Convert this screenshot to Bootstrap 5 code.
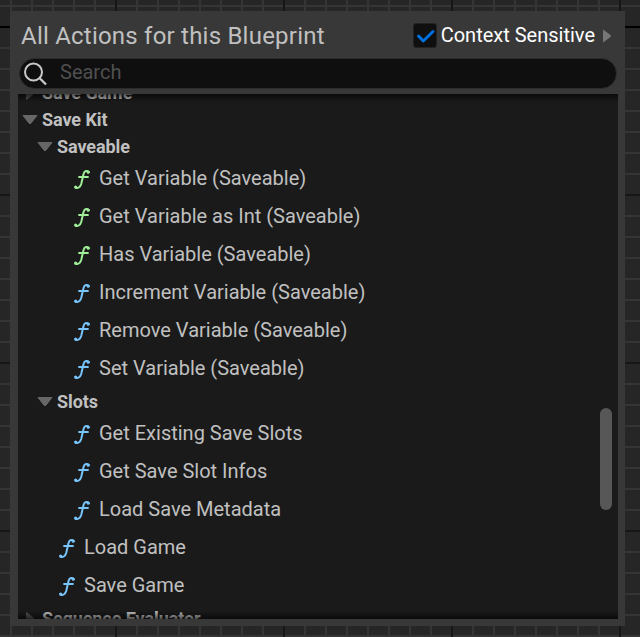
<!DOCTYPE html>
<html lang="en">
<head>
<meta charset="utf-8">
<title>Blueprint Actions</title>
<link href="https://cdn.jsdelivr.net/npm/bootstrap@5.3.0/dist/css/bootstrap.min.css" rel="stylesheet">
<style>
body{font-family:Roboto,"Liberation Sans",sans-serif;width:640px;height:637px;overflow:hidden;color:#c0c0c0;
 background-color:#262626;padding:11px 15px 11px 10px;
 background-image:
 linear-gradient(#000,#000),
 repeating-linear-gradient(to right,#161616 0 2px,transparent 2px 168px),
 repeating-linear-gradient(to bottom,#161616 0 2px,transparent 2px 168px),
 repeating-linear-gradient(to right,#353535 0 2px,transparent 2px 21px),
 repeating-linear-gradient(to bottom,#353535 0 2px,transparent 2px 21px);
 background-size:640px 2px,840px 840px,840px 840px,840px 840px,840px 840px;
 background-position:0 26px,115px 0,0 26px,-11px 0,0 5px;
 background-repeat:no-repeat,repeat,repeat,repeat,repeat}
.panel{width:615px;height:615px;background:#383838;padding:0 7px 7px 8px}
.head{height:47px;padding:2px 7px 0 3px}
.title{font-size:24px;line-height:30px;letter-spacing:.22px;color:#c0c0c0}
.check{width:24px;height:25px;background:#0f0f0f;border:1px solid #222;border-radius:3px}
.ctx{font-size:20px;line-height:24px;color:#fff;padding-bottom:2px}
.search{height:31px;margin:0 1px 5px;background:#0f0f0f;border:1px solid #2b2b2b;border-radius:16px;padding-left:4px}
.search input{all:unset;font-size:20px;line-height:24px;color:#c0c0c0;width:500px;margin-left:12px;padding-bottom:3px}
.search input::placeholder{color:#4f4f4f;opacity:1}
.tree{height:525px;background:#1a1a1a}
.tree-rows{margin-top:-15px}
.grp{height:27px;font-size:18px;font-weight:700;line-height:27px;letter-spacing:-.08px}
.leaf{height:38px;font-size:20px;line-height:36px}
.leaf span{padding-bottom:2px}
.lv0{padding-left:4px}.lv1{padding-left:19px}.lv2{padding-left:55px}.lv1.leaf{padding-left:40px}
.arrow{width:16px;height:16px;margin-right:4px}
.fn{width:18px;height:22px;margin-right:8px;color:#77c5fb}
.fn.pure{color:#a0ee98}
.shade{inset:0;pointer-events:none;background:linear-gradient(#0009,#0000 8px),linear-gradient(to top,#0009,#0000 8px)}
.thumb{right:6px;top:314px;width:12px;height:102px;border-radius:6px;background:#575757}
</style>
</head>
<body>
<svg class="d-none">
 <symbol id="f" viewBox="0 0 18 22"><g fill="none" stroke="currentColor" stroke-linecap="round"><path d="M15.800 4C14.500 2.600 11.600 2.400 10.600 5.800L8.200 16C7.300 19.300 4.500 20.800 2.400 19.600" stroke-width="2"/><path d="M6 9h9" stroke-width="1.800"/></g><circle cx="15.200" cy="4.200" r="1.500" fill="currentColor"/><circle cx="2.700" cy="19" r="1.600" fill="currentColor"/></symbol>
 <symbol id="down" viewBox="0 0 16 16"><path d="M1 3.500h14L9 11.200q-1 1.200-2 0z" fill="#666" stroke="#666" stroke-linejoin="round"/></symbol>
 <symbol id="right" viewBox="0 0 16 16"><path d="M4.500 1.500v13l7-5.500q1-1 0-2z" fill="#555" stroke="#555" stroke-linejoin="round"/></symbol>
</svg>
<main class="panel d-flex flex-column">
 <header class="head d-flex align-items-center justify-content-between">
  <div class="title text-nowrap">All Actions for this Blueprint</div>
  <div class="d-flex align-items-center text-nowrap">
   <span class="check d-flex me-1"><svg width="22" height="23" viewBox="0 0 22 23"><path d="M4.500 12l4.800 5L19 7.500" fill="none" stroke="#0070e0" stroke-width="3" stroke-linecap="round" stroke-linejoin="round"/></svg></span>
   <span class="ctx">Context Sensitive</span>
   <svg class="ms-2" width="8" height="14" viewBox="0 0 8 14"><path d="M0 .5v13L7.500 8q.8-1 0-2z" fill="#777"/></svg>
  </div>
 </header>
 <div class="search d-flex align-items-center">
  <svg width="24" height="24" viewBox="0 0 24 24" fill="none" stroke="#c8c8c8" stroke-width="2"><circle cx="9.500" cy="10" r="8.500"/><path d="M15.500 16l6.500 6.500" stroke-width="2.300"/></svg>
  <input placeholder="Search" aria-label="Search">
 </div>
 <section class="tree position-relative overflow-hidden">
  <div class="tree-rows">
   <div class="grp lv0 d-flex align-items-center"><svg class="arrow"><use href="#right"/></svg><span>Save Game</span></div>
   <div class="grp lv0 d-flex align-items-center"><svg class="arrow"><use href="#down"/></svg><span>Save Kit</span></div>
   <div class="grp lv1 d-flex align-items-center"><svg class="arrow"><use href="#down"/></svg><span>Saveable</span></div>
   <div class="leaf lv2 d-flex align-items-center"><svg class="fn pure"><use href="#f"/></svg><span>Get Variable (Saveable)</span></div>
   <div class="leaf lv2 d-flex align-items-center"><svg class="fn pure"><use href="#f"/></svg><span>Get Variable as Int (Saveable)</span></div>
   <div class="leaf lv2 d-flex align-items-center"><svg class="fn pure"><use href="#f"/></svg><span>Has Variable (Saveable)</span></div>
   <div class="leaf lv2 d-flex align-items-center"><svg class="fn"><use href="#f"/></svg><span>Increment Variable (Saveable)</span></div>
   <div class="leaf lv2 d-flex align-items-center"><svg class="fn"><use href="#f"/></svg><span>Remove Variable (Saveable)</span></div>
   <div class="leaf lv2 d-flex align-items-center"><svg class="fn"><use href="#f"/></svg><span>Set Variable (Saveable)</span></div>
   <div class="grp lv1 d-flex align-items-center"><svg class="arrow"><use href="#down"/></svg><span>Slots</span></div>
   <div class="leaf lv2 d-flex align-items-center"><svg class="fn"><use href="#f"/></svg><span>Get Existing Save Slots</span></div>
   <div class="leaf lv2 d-flex align-items-center"><svg class="fn"><use href="#f"/></svg><span>Get Save Slot Infos</span></div>
   <div class="leaf lv2 d-flex align-items-center"><svg class="fn"><use href="#f"/></svg><span>Load Save Metadata</span></div>
   <div class="leaf lv1 d-flex align-items-center"><svg class="fn"><use href="#f"/></svg><span>Load Game</span></div>
   <div class="leaf lv1 d-flex align-items-center"><svg class="fn"><use href="#f"/></svg><span>Save Game</span></div>
   <div class="grp lv0 d-flex align-items-center"><svg class="arrow"><use href="#right"/></svg><span>Sequence Evaluator</span></div>
  </div>
  <div class="shade position-absolute"></div>
  <div class="thumb position-absolute"></div>
 </section>
</main>
<script src="https://cdn.jsdelivr.net/npm/bootstrap@5.3.0/dist/js/bootstrap.bundle.min.js"></script>
</body>
</html>
